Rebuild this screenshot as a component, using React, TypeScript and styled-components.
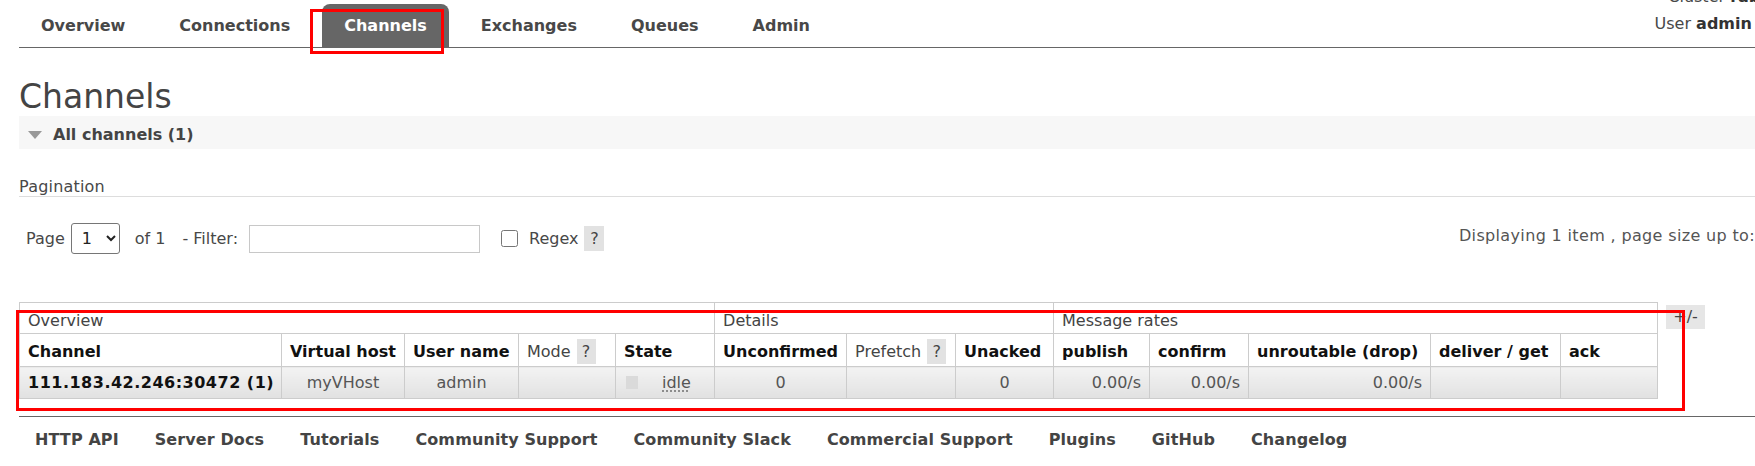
import React from "react";
import styled, { createGlobalStyle } from "styled-components";

const GlobalStyle = createGlobalStyle`
  html, body {
    margin: 0;
    padding: 0;
    background: #fff;
    overflow: hidden;
  }
  body {
    font-family: "DejaVu Sans", Verdana, sans-serif;
    font-size: 16px;
    color: #484848;
  }
  * { box-sizing: border-box; }
`;

const tabs = ["Overview", "Connections", "Channels", "Exchanges", "Queues", "Admin"];

const footerLinks = [
  "HTTP API",
  "Server Docs",
  "Tutorials",
  "Community Support",
  "Community Slack",
  "Commercial Support",
  "Plugins",
  "GitHub",
  "Changelog",
];

type Col = { label: string; w: number; help?: boolean };

const columns: Col[] = [
  { label: "Channel", w: 262 },
  { label: "Virtual host", w: 123 },
  { label: "User name", w: 114 },
  { label: "Mode", w: 97, help: true },
  { label: "State", w: 99 },
  { label: "Unconfirmed", w: 132 },
  { label: "Prefetch", w: 109, help: true },
  { label: "Unacked", w: 98 },
  { label: "publish", w: 96 },
  { label: "confirm", w: 99 },
  { label: "unroutable (drop)", w: 182 },
  { label: "deliver / get", w: 130 },
  { label: "ack", w: 97 },
];

const groups = [
  { label: "Overview", span: 5 },
  { label: "Details", span: 3 },
  { label: "Message rates", span: 5 },
];

export default function App() {
  return (
    <Page>
      <GlobalStyle />
      <Header>
        <Nav>
          {tabs.map((t) => (
            <Tab key={t} $active={t === "Channels"}>{t}</Tab>
          ))}
        </Nav>
        <UserInfo>
          <div>Cluster <b>rabbit@mq</b></div>
          <div>
            User <b>admin</b> <LogoutButton>Log out</LogoutButton>
          </div>
        </UserInfo>
      </Header>

      <Title>Channels</Title>
      <SectionBar>
        <Triangle />
        All channels (1)
      </SectionBar>

      <SubTitle>Pagination</SubTitle>
      <PagerRow>
        <PagerText $ml={7}>Page</PagerText>
        <PageSelect $ml={6} defaultValue="1">
          <option value="1">1</option>
        </PageSelect>
        <PagerText $ml={15}>of 1</PagerText>
        <PagerText $ml={17}>- Filter:</PagerText>
        <FilterInput type="text" />
        <Checkbox type="checkbox" />
        <PagerText $ml={11}>Regex</PagerText>
        <Help $ml={6}>?</Help>
        <Displaying>
          Displaying 1 item , page size up to:
          <SizeSelect defaultValue="100">
            <option value="100">100</option>
          </SizeSelect>
        </Displaying>
      </PagerRow>

      <TableArea>
        <Table>
          <colgroup>
            {columns.map((c) => (
              <col key={c.label} style={{ width: c.w }} />
            ))}
          </colgroup>
          <thead>
            <Row $h={31}>
              {groups.map((g) => (
                <GroupCell key={g.label} colSpan={g.span}>{g.label}</GroupCell>
              ))}
            </Row>
            <Row $h={33}>
              {columns.map((c) => (
                <HeadCell key={c.label} $bold={!c.help}>
                  {c.label}
                  {c.help && <CellHelp>?</CellHelp>}
                </HeadCell>
              ))}
            </Row>
          </thead>
          <tbody>
            <Row $h={32}>
              <DataCell $bold>111.183.42.246:30472 (1)</DataCell>
              <DataCell $align="center">myVHost</DataCell>
              <DataCell $align="center">admin</DataCell>
              <DataCell />
              <DataCell>
                <StateBox>
                  <StateSquare />
                  <Idle>idle</Idle>
                </StateBox>
              </DataCell>
              <DataCell $align="center">0</DataCell>
              <DataCell />
              <DataCell $align="center">0</DataCell>
              <DataCell $align="right">0.00/s</DataCell>
              <DataCell $align="right">0.00/s</DataCell>
              <DataCell $align="right">0.00/s</DataCell>
              <DataCell />
              <DataCell />
            </Row>
          </tbody>
        </Table>
        <Toggle>+/-</Toggle>
      </TableArea>

      <Footer>
        {footerLinks.map((l) => (
          <FooterLink key={l}>{l}</FooterLink>
        ))}
      </Footer>

      <Mark $x={310} $y={9} $w={134} $h={45} />
      <Mark $x={16} $y={310} $w={1669} $h={101} />
    </Page>
  );
}

const Page = styled.div`
  position: relative;
  padding-left: 19px;
  min-height: 466px;
`;

const Header = styled.header`
  display: flex;
  align-items: flex-start;
  height: 48px;
  border-bottom: 1px solid #666;
`;

const Nav = styled.ul`
  display: flex;
  gap: 10px;
  margin: 4px 0 0;
  padding: 0;
  list-style: none;
`;

const Tab = styled.li<{ $active?: boolean }>`
  padding: 0 22px;
  line-height: 43px;
  font-weight: bold;
  border-radius: 8px 8px 0 0;
  background: ${(p) => (p.$active ? "#666" : "transparent")};
  color: ${(p) => (p.$active ? "#fff" : "#484848")};
`;

const UserInfo = styled.div`
  margin: -17px -74px 0 auto;
  text-align: right;
  line-height: 27px;
  white-space: nowrap;
  b { color: #333; }
`;

const LogoutButton = styled.button`
  width: 72px;
  font: 14px "DejaVu Sans", sans-serif;
`;

const Title = styled.h1`
  margin: 30px 0 0;
  font-size: 33px;
  line-height: 38px;
  font-weight: normal;
  color: #444;
`;

const SectionBar = styled.div`
  display: flex;
  align-items: center;
  gap: 11px;
  padding: 9px 0 5px 9px;
  line-height: 19px;
  background: #f7f7f7;
  font-weight: bold;
  color: #444;
`;

const Triangle = styled.span`
  width: 0;
  height: 0;
  border-left: 7.5px solid transparent;
  border-right: 7.5px solid transparent;
  border-top: 8px solid #999;
`;

const SubTitle = styled.h3`
  margin: 28px 0 0;
  font-size: 16px;
  font-weight: normal;
  line-height: 19px;
  letter-spacing: 0.2px;
  border-bottom: 1px solid #ddd;
`;

const PagerRow = styled.div`
  display: flex;
  align-items: center;
  height: 31px;
  margin: 26px -64px 0 0;
  white-space: nowrap;
`;

const PagerText = styled.span<{ $ml: number }>`
  margin-left: ${(p) => p.$ml}px;
  line-height: 19px;
`;

const PageSelect = styled.select<{ $ml: number }>`
  margin-left: ${(p) => p.$ml}px;
  width: 49px;
  height: 31px;
  padding: 0 0 0 6px;
  border: 1px solid #767676;
  border-radius: 3px;
  background: #fff;
  color: #222;
  font: 16px "DejaVu Sans", sans-serif;
`;

const FilterInput = styled.input`
  margin-left: 11px;
  width: 231px;
  height: 28px;
  border: 1px solid #c8c8c8;
  font: 16px "DejaVu Sans", sans-serif;
`;

const Checkbox = styled.input`
  margin: 0 0 0 21px;
  width: 17px;
  height: 17px;
`;

const Help = styled.span<{ $ml: number }>`
  display: inline-flex;
  align-items: center;
  justify-content: center;
  margin-left: ${(p) => p.$ml}px;
  width: 20px;
  height: 25px;
  background: #e2e2e2;
  color: #444;
`;

const Displaying = styled.div`
  display: flex;
  align-items: center;
  gap: 8px;
  align-self: flex-start;
  margin: -2px 0 0 auto;
  line-height: 19px;
  letter-spacing: 0.35px;
  color: #555;
`;

const SizeSelect = styled.select`
  width: 56px;
  height: 28px;
  font: 16px "DejaVu Sans", sans-serif;
`;

const TableArea = styled.div`
  display: flex;
  align-items: flex-start;
  gap: 8px;
  margin-top: 48px;
`;

const Table = styled.table`
  border-collapse: collapse;
  table-layout: fixed;
  width: 1638px;
`;

const Row = styled.tr<{ $h: number }>`
  height: ${(p) => p.$h}px;
`;

const GroupCell = styled.th`
  padding: 4px 8px 0;
  border: 1px solid #ccc;
  text-align: left;
  font-weight: normal;
  line-height: 19px;
  color: #444;
  background: #fff;
`;

const HeadCell = styled.th<{ $bold?: boolean }>`
  padding: 3px 8px 0;
  border: 1px solid #ccc;
  text-align: left;
  white-space: nowrap;
  line-height: 19px;
  font-weight: ${(p) => (p.$bold ? "bold" : "normal")};
  color: ${(p) => (p.$bold ? "#111" : "#444")};
  background: #fff;
`;

const CellHelp = styled.span`
  display: inline-block;
  vertical-align: baseline;
  margin: -4px 0 -3px 6px;
  width: 19px;
  height: 25px;
  line-height: 25px;
  text-align: center;
  background: #e2e2e2;
  color: #444;
  font-weight: normal;
`;

const DataCell = styled.td<{ $bold?: boolean; $align?: string }>`
  padding: 0 8px;
  border: 1px solid #ccc;
  white-space: nowrap;
  line-height: 19px;
  text-align: ${(p) => p.$align || "left"};
  font-weight: ${(p) => (p.$bold ? "bold" : "normal")};
  letter-spacing: ${(p) => (p.$bold ? "0.5px" : "0")};
  color: ${(p) => (p.$bold ? "#111" : "#555")};
  background: linear-gradient(#f3f3f3, #e1e1e1);
`;

const StateBox = styled.div`
  display: flex;
  align-items: center;
`;

const StateSquare = styled.span`
  margin-left: 2px;
  width: 12px;
  height: 13px;
  background: #dadada;
`;

const Idle = styled.span`
  margin-left: 24px;
  text-decoration: underline dotted #777;
  text-underline-offset: 3px;
`;

const Toggle = styled.span`
  margin-top: 3px;
  width: 39px;
  height: 24px;
  line-height: 24px;
  text-align: center;
  background: #e6e6e6;
  color: #444;
`;

const Footer = styled.ul`
  display: flex;
  gap: 36px;
  margin: 17px 0 0;
  padding: 13px 0 0 16px;
  list-style: none;
  border-top: 1px solid #666;
`;

const FooterLink = styled.li`
  font-weight: bold;
  line-height: 19px;
  letter-spacing: 0.1px;
  color: #444;
  white-space: nowrap;
`;

const Mark = styled.div<{ $x: number; $y: number; $w: number; $h: number }>`
  position: absolute;
  left: ${(p) => p.$x}px;
  top: ${(p) => p.$y}px;
  width: ${(p) => p.$w}px;
  height: ${(p) => p.$h}px;
  border: 3px solid #f00;
  pointer-events: none;
`;
